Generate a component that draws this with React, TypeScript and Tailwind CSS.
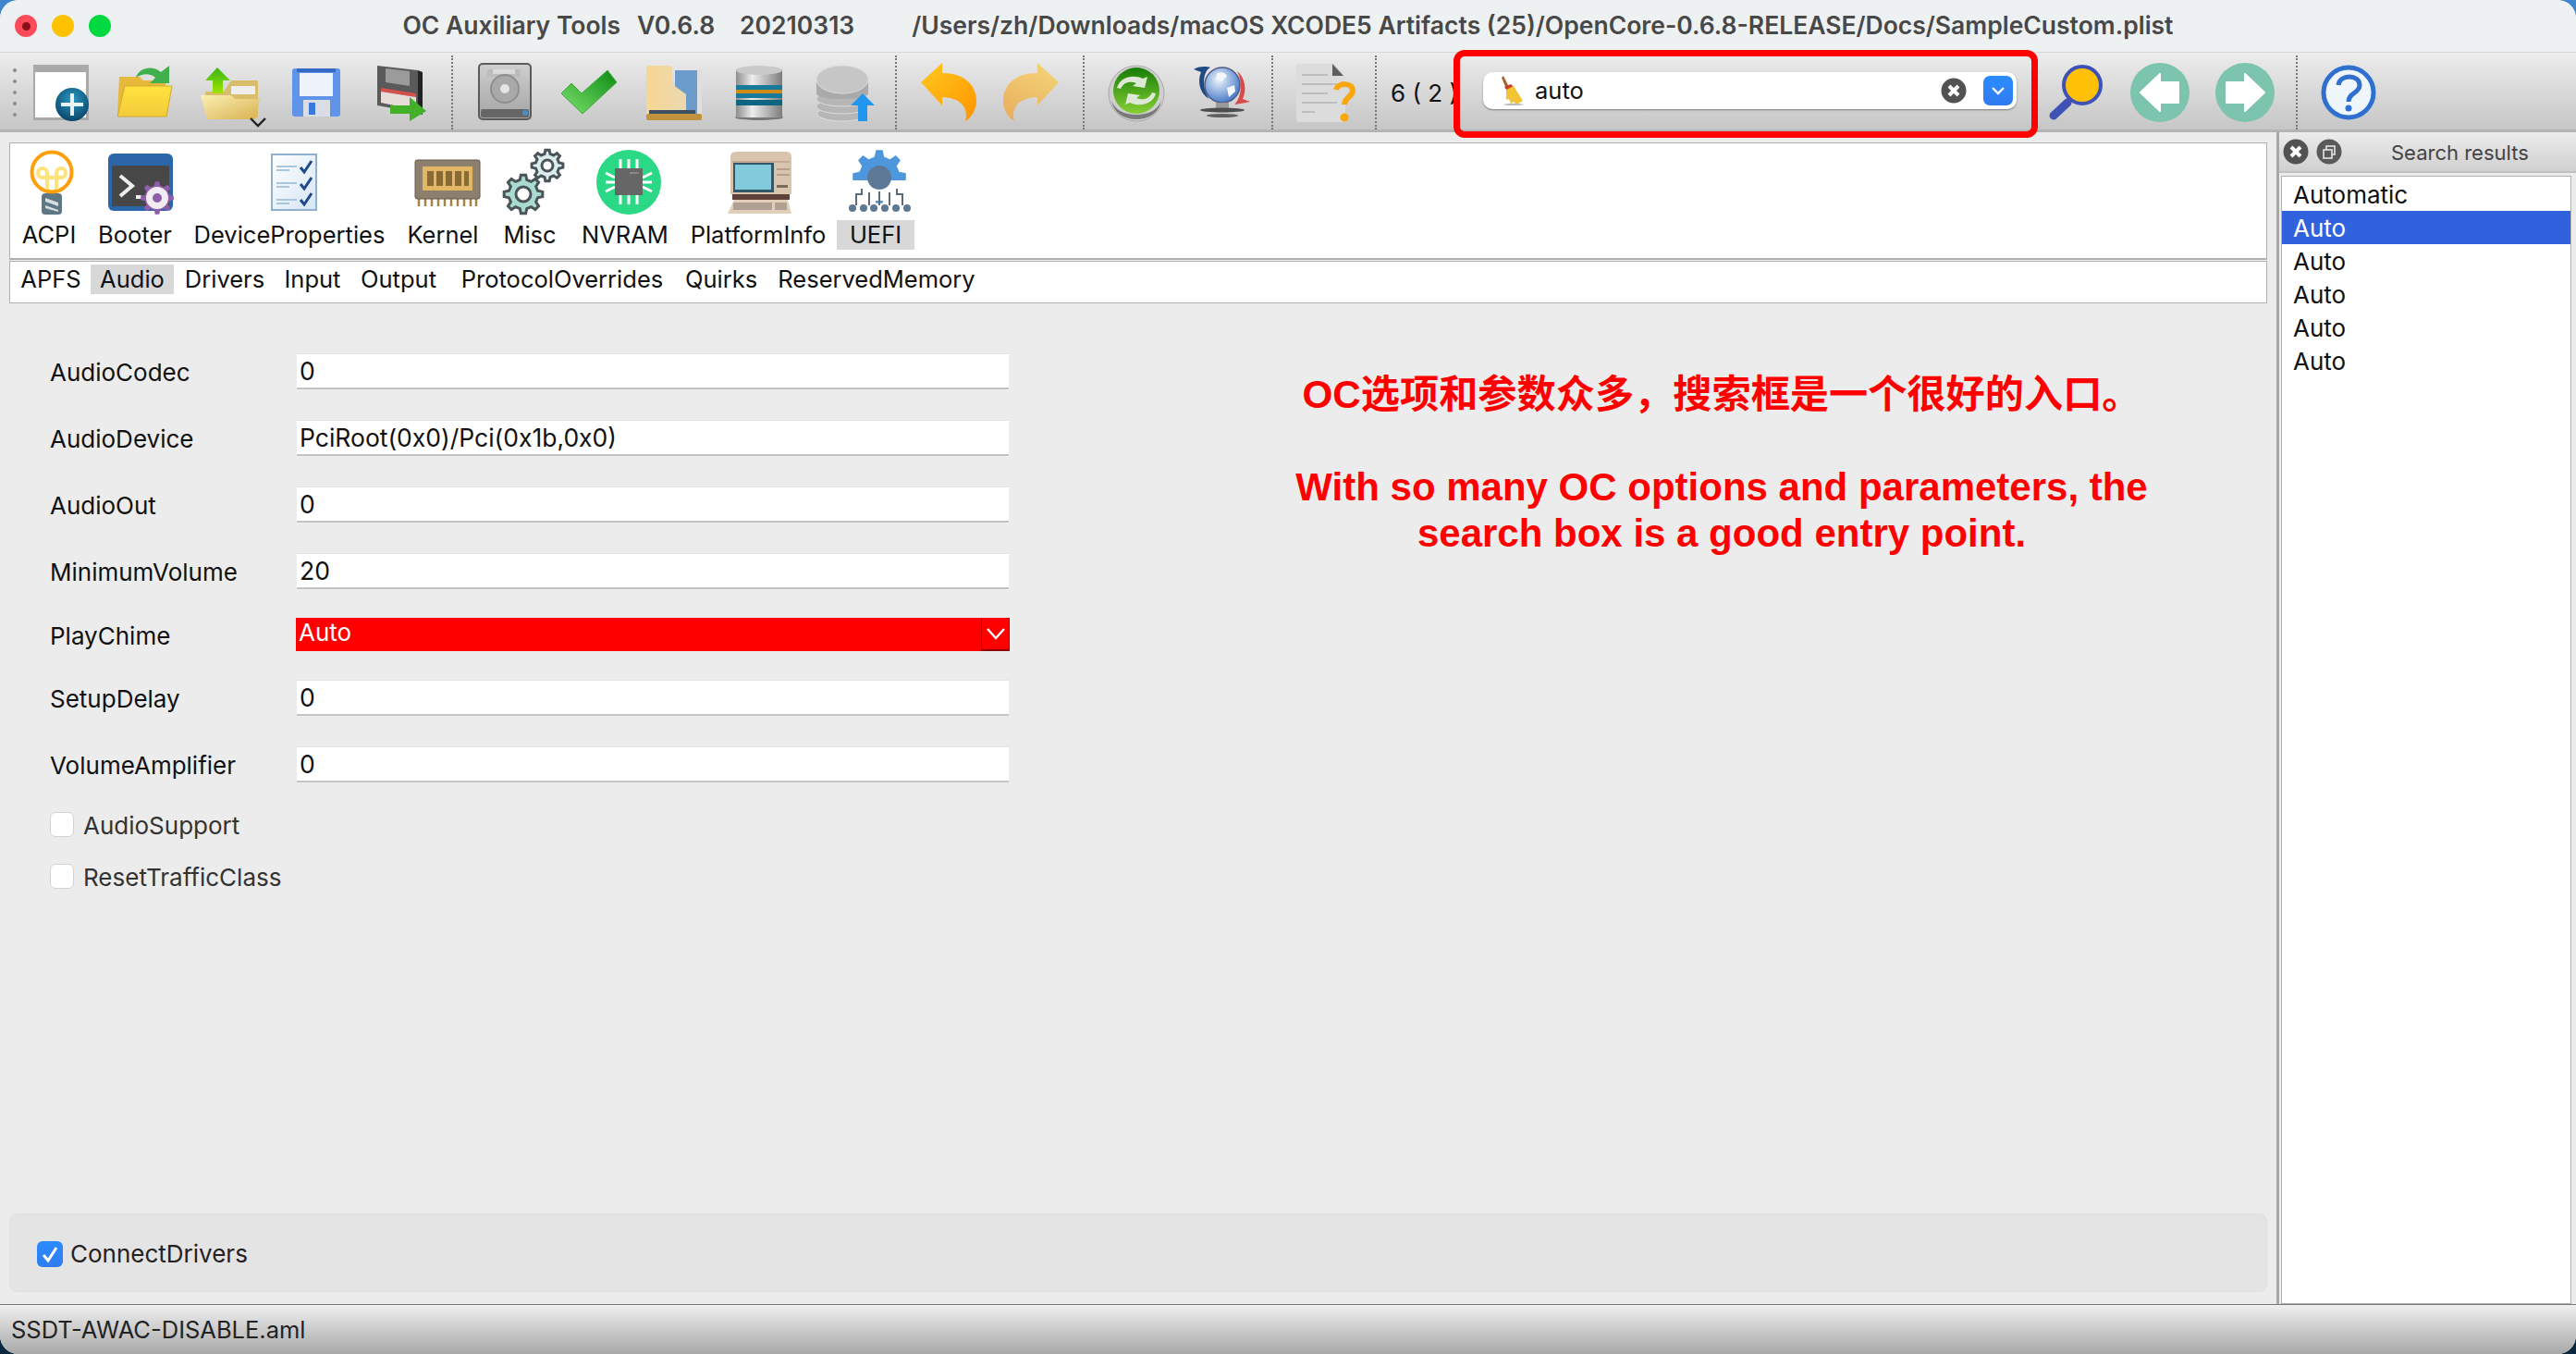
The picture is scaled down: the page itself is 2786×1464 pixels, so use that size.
import React from 'react';

// teeth on a gear outline, the icons below reuse it
const gearPath = (cx: number, cy: number, r: number, teeth: number) => {
  const pts: string[] = [];
  const inner = r * 0.76;
  const step = (Math.PI * 2) / teeth;
  for (let i = 0; i < teeth; i++) {
    const a = i * step - Math.PI / 2;
    const w = step * 0.2;
    const list: [number, number][] = [
      [inner, a - w * 1.5],
      [r, a - w * 0.8],
      [r, a + w * 0.8],
      [inner, a + w * 1.5],
    ];
    list.forEach(([rad, ang]) => pts.push(`${(cx + rad * Math.cos(ang)).toFixed(2)} ${(cy + rad * Math.sin(ang)).toFixed(2)}`));
  }
  return `M${pts.join('L')}Z`;
};

const Box = ({ children }: { children: React.ReactNode }) => (
  <svg width="70" height="70" viewBox="0 0 70 70" className="overflow-visible shrink-0">
    {children}
  </svg>
);

const NewIcon = () => (
  <Box>
    <defs>
      <radialGradient id="nw" cx="0.5" cy="0.35" r="0.7">
        <stop offset="0" stopColor="#2b9ac6" />
        <stop offset="1" stopColor="#073f63" />
      </radialGradient>
    </defs>
    <rect x="6" y="5" width="60" height="60" fill="#a9a9a9" />
    <rect x="8" y="13" width="55" height="49" fill="#fff" />
    <circle cx="48" cy="48" r="18" fill="url(#nw)" />
    <path d="M46 36h4v10h10v4H50v10h-4V50H36v-4h10z" fill="#fff" opacity="0.9" />
  </Box>
);

const OpenIcon = () => (
  <Box>
    <defs>
      <linearGradient id="op" x1="0" y1="0" x2="0" y2="1">
        <stop offset="0" stopColor="#ffe33f" />
        <stop offset="1" stopColor="#f3cb3a" />
      </linearGradient>
    </defs>
    <path d="M7 18h22l4 4h24v38H5z" fill="#e6b93a" />
    <path d="M13 28h51l-6 33H5z" fill="url(#op)" stroke="#d5a92c" />
    <path d="M25 19c3-11 18-14 27-6l9-7v19H40l6-6c-5-5-14-5-21 0z" fill="#3fb04c" />
  </Box>
);

const OpenUpIcon = () => (
  <Box>
    <defs>
      <linearGradient id="ou" x1="0" y1="0" x2="1" y2="1">
        <stop offset="0" stopColor="#fbf0b4" />
        <stop offset="1" stopColor="#d8b14f" />
      </linearGradient>
      <linearGradient id="ou2" x1="0" y1="0" x2="0" y2="1">
        <stop offset="0" stopColor="#39b516" />
        <stop offset="1" stopColor="#9ee500" />
      </linearGradient>
    </defs>
    <path d="M8 34h20l8-12h29v40H10z" fill="#d9bd6a" />
    <rect x="36" y="28" width="26" height="9" fill="#eee" />
    <path d="M3 38h33l4 4h27l-5 22H10z" fill="url(#ou)" />
    <path d="M21 8l14 14h-8v14H16V22H8z" fill="url(#ou2)" />
    <path d="M57 63l8 8 8-8" fill="none" stroke="#222" strokeWidth="2.4" />
  </Box>
);

const SaveIcon = () => (
  <Box>
    <rect x="10" y="9" width="52" height="52" rx="3" fill="#5f94e8" />
    <rect x="15" y="9" width="42" height="4" fill="#3569c6" />
    <rect x="18" y="14" width="36" height="25" fill="#eef3fb" />
    <rect x="22" y="43" width="29" height="18" fill="#d9dde6" />
    <rect x="28" y="46" width="7" height="13" fill="#3a78dd" />
  </Box>
);

const SaveAsIcon = () => (
  <Box>
    <path d="M10 6l44 5v46l-44-8z" fill="#5a5a5a" />
    <path d="M54 11l5 2v46l-5-2z" fill="#222" />
    <path d="M19 9l26 3v16l-26-4z" fill="#9b9b9b" />
    <path d="M14 30l38 6v4l-38-6z" fill="#d8504a" />
    <path d="M14 34l38 6v14l-38-8z" fill="#e6dcd8" />
    <path d="M24 49h21v-9l18 15-18 11v-8H24z" fill="#43b02a" />
  </Box>
);

const DiskIcon = () => (
  <Box>
    <defs>
      <linearGradient id="dk" x1="0" y1="0" x2="0" y2="1">
        <stop offset="0" stopColor="#cfcfcf" />
        <stop offset="1" stopColor="#a3a3a3" />
      </linearGradient>
    </defs>
    <rect x="8" y="4" width="56" height="60" rx="4" fill="url(#dk)" stroke="#5b5b5b" strokeWidth="2" />
    <rect x="17" y="10" width="36" height="8" fill="#bcbcbc" />
    <rect x="23" y="10" width="24" height="5" fill="#dadada" />
    <circle cx="36" cy="31" r="15" fill="#a9a9a9" stroke="#8e8e8e" strokeWidth="2" />
    <circle cx="36" cy="31" r="5" fill="#e4e4e4" />
    <rect x="10" y="53" width="52" height="9" rx="2" fill="#666" />
    <circle cx="58" cy="57" r="3" fill="#4a8ec7" />
  </Box>
);

const CheckIcon = () => (
  <Box>
    <defs>
      <linearGradient id="ck" x1="0" y1="1" x2="1" y2="0">
        <stop offset="0" stopColor="#7ce36f" />
        <stop offset="1" stopColor="#0b8a12" />
      </linearGradient>
    </defs>
    <path d="M5 36l11-11 11 11 28-25 10 13-37 34z" fill="url(#ck)" stroke="#43a83c" />
  </Box>
);

const FolderIcon = () => (
  <Box>
    <defs>
      <linearGradient id="fd" x1="0" y1="0" x2="1" y2="0">
        <stop offset="0" stopColor="#f7d693" />
        <stop offset="1" stopColor="#ecd9b0" />
      </linearGradient>
    </defs>
    <rect x="36" y="11" width="24" height="50" fill="#6c9ccb" />
    <rect x="60" y="10" width="5" height="52" fill="#dedede" />
    <path d="M5 8q0-2 3-2h21q3 0 4 3v17l15 11v22H5z" fill="url(#fd)" />
    <rect x="8" y="54" width="50" height="4" fill="#3e4f60" />
    <rect x="5" y="58" width="60" height="7" rx="2" fill="#c2923f" />
  </Box>
);

const DbIcon = () => (
  <Box>
    <defs>
      <linearGradient id="db" x1="0" y1="0" x2="1" y2="0">
        <stop offset="0" stopColor="#8d8d8d" />
        <stop offset="0.35" stopColor="#ededed" />
        <stop offset="1" stopColor="#7d7d7d" />
      </linearGradient>
    </defs>
    <ellipse cx="35" cy="62" rx="26" ry="3" fill="#777" />
    <rect x="10" y="10" width="50" height="52" fill="url(#db)" />
    <ellipse cx="35" cy="11" rx="25" ry="5" fill="#c9c9c9" />
    <rect x="10" y="27" width="50" height="5" fill="#187a9a" />
    <rect x="10" y="32" width="50" height="4" fill="#d08a16" />
    <rect x="10" y="36" width="50" height="5" fill="#187a9a" />
    <rect x="10" y="43" width="50" height="6" fill="#0f6482" />
  </Box>
);

const DbUpIcon = () => (
  <Box>
    <g fill="#b6b6b6" stroke="#dcdcdc">
      <ellipse cx="33" cy="58" rx="27" ry="8" />
      <ellipse cx="33" cy="50" rx="28" ry="8" />
      <ellipse cx="33" cy="42" rx="28" ry="8" />
    </g>
    <ellipse cx="33" cy="22" rx="28" ry="16" fill="#b9b9b9" />
    <path d="M5 22v14c0 8 56 8 56 0V22z" fill="#aaa" />
    <ellipse cx="33" cy="21" rx="28" ry="15" fill="#c6c6c6" stroke="#dcdcdc" />
    <path d="M55 36l13 13h-8v17H50V49h-8z" fill="#2196ee" />
  </Box>
);

const UndoIcon = ({ flip, light }: { flip?: boolean; light?: boolean }) => (
  <Box>
    <defs>
      <linearGradient id="un" x1="0" y1="0" x2="1" y2="1">
        <stop offset="0" stopColor="#ffc81f" />
        <stop offset="1" stopColor="#ff9400" />
      </linearGradient>
    </defs>
    <g transform={flip ? 'translate(69 0) scale(-1 1)' : undefined} opacity={light ? 0.55 : 1}>
      <path d="M6 24L29 3v11c24 0 37 13 37 30 0 9-5 18-12 22 3-10 0-25-25-26v9z" fill="url(#un)" />
    </g>
  </Box>
);

const RefreshIcon = () => (
  <Box>
    <defs>
      <linearGradient id="rf" x1="0" y1="0" x2="0" y2="1">
        <stop offset="0" stopColor="#167d07" />
        <stop offset="1" stopColor="#86cf34" />
      </linearGradient>
    </defs>
    <circle cx="35" cy="36" r="30" fill="#cfcfcf" stroke="#a8a8a8" />
    <path d="M8 44c3 14 14 20 27 20s24-6 27-20c-4 10-14 15-27 15S12 54 8 44z" fill="#7a7a7a" />
    <circle cx="35" cy="33" r="25" fill="url(#rf)" />
    <path d="M14 30c3-12 18-15 28-10l5-2-3 12-13-2 4-3c-7-3-14-1-17 6z" fill="#dfe8d6" />
    <path d="M56 36c-3 12-18 15-28 10l-5 2 3-12 13 2-4 3c7 3 14 1 17-6z" fill="#dfe8d6" />
  </Box>
);

const GlobeIcon = () => (
  <Box>
    <defs>
      <radialGradient id="gb" cx="0.4" cy="0.35" r="0.7">
        <stop offset="0" stopColor="#eef4fb" />
        <stop offset="1" stopColor="#3f74c4" />
      </radialGradient>
    </defs>
    <path d="M5 10c7-4 14-3 18-2C15 12 13 30 22 42 11 36 9 22 13 13z" fill="#1f4a84" />
    <path d="M52 12c8 6 11 20 6 30l8 3-16 3c-2 0 0 0 0-1 7-8 8-24 2-35z" fill="#d94a4a" />
    <circle cx="36" cy="27" r="19" fill="url(#gb)" stroke="#4f5b84" strokeWidth="1.5" />
    <path d="M30 14c5-2 10 0 11 3l-5 6-7-2zM41 30l8-3 1 7-7 6z" fill="#f4f6fa" />
    <rect x="29" y="46" width="14" height="8" fill="#9a9a9a" />
    <ellipse cx="36" cy="54" rx="24" ry="2.5" fill="#4d4d4d" />
    <ellipse cx="36" cy="60" rx="17" ry="2" fill="#5f5f5f" />
  </Box>
);

const HelpDocIcon = () => (
  <Box>
    <path d="M4 7q0-3 3-3h38l12 14v49H7q-3 0-3-3z" fill="#dcdcdc" />
    <path d="M43 4l12 13H43z" fill="#5e5e5e" />
    <g stroke="#b4b4b4" strokeWidth="1.5">
      <path d="M10 16h28M10 26h38M10 36h28M10 46h38M10 56h14" />
    </g>
    <path d="M47 32c2-8 18-8 18 1 0 7-9 7-9 15" fill="none" stroke="#f9a70a" strokeWidth="6" />
    <circle cx="56" cy="62" r="4.5" fill="#f9a70a" />
  </Box>
);

const BroomIcon = () => (
  <svg width="28" height="32" viewBox="0 0 28 32" className="shrink-0">
    <path d="M4 0l6 12-3 2L2 2z" fill="#a8662a" />
    <path d="M5 12l7-3 3 3-7 4z" fill="#c93b2b" />
    <path d="M7 15l8-4 10 16-7 4-3-3-3 2-2-5-3 1z" fill="#f2c334" />
    <ellipse cx="15" cy="31" rx="11" ry="1.2" fill="#bbb" />
  </svg>
);

const CircleX = () => (
  <svg width="28" height="28" viewBox="0 0 28 28" className="shrink-0">
    <circle cx="14" cy="14" r="13.5" fill="#525252" />
    <path d="M9 9l10 10M19 9L9 19" stroke="#fff" strokeWidth="4" />
  </svg>
);

const CircleRestore = () => (
  <svg width="28" height="28" viewBox="0 0 28 28" className="shrink-0">
    <circle cx="14" cy="14" r="13.5" fill="#5a5a5a" />
    <rect x="11" y="8" width="9" height="9" fill="none" stroke="#e5e5e5" strokeWidth="1.6" />
    <rect x="8" y="12" width="9" height="9" fill="#5a5a5a" stroke="#e5e5e5" strokeWidth="1.6" />
  </svg>
);

const MagnifierIcon = () => (
  <Box>
    <path d="M27 46L12 60" stroke="#3f51b5" strokeWidth="9" strokeLinecap="round" />
    <circle cx="43" cy="27" r="20" fill="#ffc107" stroke="#3f51b5" strokeWidth="4" />
  </Box>
);

const ArrowCircle = ({ right }: { right?: boolean }) => (
  <Box>
    <circle cx="35" cy="35" r="32" fill="#7cc4ad" />
    <g transform={right ? 'translate(70 0) scale(-1 1)' : undefined}>
      <path d="M14 35l21-20v9h20v22H35v9z" fill="#fff" stroke="#fff" strokeLinejoin="round" strokeWidth="2" />
    </g>
  </Box>
);

const HelpIcon = () => (
  <Box>
    <circle cx="35" cy="35" r="27" fill="#eef5fb" stroke="#2f6fd0" strokeWidth="5" />
    <path d="M24 27c1-12 23-12 23 0 0 9-12 8-12 18" fill="none" stroke="#2f6fd0" strokeWidth="5" />
    <circle cx="35" cy="52" r="3.5" fill="#2f6fd0" />
  </Box>
);

const BulbIcon = () => (
  <Box>
    <rect x="27" y="47" width="22" height="23" rx="4" fill="#5d7783" />
    <path d="M31 52l14 5v4l-14-5zM31 60l14 5v2l-14-4z" fill="#d6dde0" />
    <circle cx="38" cy="24" r="21.5" fill="#fff" stroke="#ff9f0a" strokeWidth="4" />
    <path d="M33 43V25a5 5 0 1 0-5 5h20a5 5 0 1 0-5-5v18" fill="none" stroke="#ffe27a" strokeWidth="4" />
  </Box>
);

const BooterIcon = () => (
  <Box>
    <rect x="6" y="4" width="70" height="62" rx="6" fill="#2a66a8" />
    <rect x="10" y="17" width="62" height="44" fill="#474747" />
    <path d="M19 28l13 11-13 11" fill="none" stroke="#eee" strokeWidth="4" />
    <rect x="36" y="49" width="6" height="4" fill="#eee" />
    <path d={gearPath(59, 52, 18, 8)} fill="#8f5ea8" />
    <circle cx="59" cy="52" r="12" fill="#f1ecf3" />
    <circle cx="59" cy="52" r="5" fill="#8f5ea8" />
  </Box>
);

const ChecklistIcon = () => (
  <Box>
    <defs>
      <linearGradient id="cl" x1="0" y1="0" x2="1" y2="1">
        <stop offset="0" stopColor="#fff" />
        <stop offset="1" stopColor="#d5e5f5" />
      </linearGradient>
    </defs>
    <rect x="16" y="5" width="48" height="60" fill="url(#cl)" stroke="#8fb0cf" strokeWidth="2" />
    <g stroke="#a9c6de" strokeWidth="2">
      <path d="M21 18h22M21 22h14M21 36h22M21 40h14M21 54h22M21 58h14" />
    </g>
    <g fill="none" stroke="#1e4a8a" strokeWidth="3">
      <path d="M47 19l4 5 8-12M47 37l4 5 8-12M47 54l4 5 8-12" />
    </g>
  </Box>
);

const ChipIcon = () => (
  <Box>
    <g stroke="#a38543" strokeWidth="2.5">
      <path d="M9 46v15M16 46v15M23 46v15M30 46v15M37 46v15M44 46v15M51 46v15M58 46v15M65 46v15M71 46v15" />
    </g>
    <rect x="5" y="11" width="70" height="42" rx="2" fill="#8d7f6e" stroke="#65594a" />
    <rect x="13" y="18" width="54" height="26" fill="#e1b665" />
    <g fill="#8a6a33">
      <rect x="18" y="23" width="7" height="16" />
      <rect x="28" y="23" width="7" height="16" />
      <rect x="38" y="23" width="7" height="16" />
      <rect x="48" y="23" width="7" height="16" />
      <rect x="58" y="23" width="5" height="16" />
    </g>
  </Box>
);

const GearsIcon = () => (
  <Box>
    <path d={gearPath(54, 17, 17, 8)} fill="#d9ecee" stroke="#4b5459" strokeWidth="3" />
    <circle cx="54" cy="17" r="6" fill="#fff" stroke="#4b5459" strokeWidth="3" />
    <path d={gearPath(28, 48, 21, 8)} fill="#a9dbd0" stroke="#4b5459" strokeWidth="3" />
    <circle cx="28" cy="48" r="8" fill="#fff" stroke="#4b5459" strokeWidth="3" />
  </Box>
);

const NvramIcon = () => (
  <Box>
    <circle cx="39" cy="35" r="35" fill="#2bd886" />
    <g stroke="#fff" strokeWidth="3">
      <path d="M30 10v10M39 10v10M48 10v10M30 49v10M39 49v10M48 49v10" />
      <path d="M14 25l10 5M14 35h10M14 45l10-5M54 30l10-5M54 35h10M54 40l10 5" />
    </g>
    <rect x="24" y="20" width="30" height="29" fill="#666" />
    <rect x="40" y="24" width="10" height="2" fill="#888" />
  </Box>
);

const ComputerIcon = () => (
  <Box>
    <path d="M5 8q0-6 6-6h55q5 0 5 6v40H5z" fill="#d9c4ad" />
    <rect x="7" y="12" width="62" height="2" fill="#c4ab92" />
    <rect x="8" y="14" width="44" height="32" fill="#335668" />
    <rect x="10" y="16" width="39" height="27" fill="#82cbdc" />
    <rect x="55" y="20" width="14" height="2" fill="#b79f88" />
    <rect x="55" y="26" width="14" height="2" fill="#b79f88" />
    <rect x="55" y="38" width="12" height="3" fill="#7a6a5a" />
    <rect x="7" y="48" width="62" height="6" fill="#5e4038" />
    <path d="M9 54h58l4 15H2z" fill="#e2cfba" />
    <rect x="8" y="57" width="42" height="8" fill="#b0a093" />
    <rect x="53" y="57" width="13" height="8" fill="#b0a093" />
  </Box>
);

const UefiIcon = () => (
  <Box>
    <path d={gearPath(39, 29, 29, 8)} fill="#4f97dd" />
    <rect x="7" y="33" width="66" height="22" fill="#fff" />
    <circle cx="39" cy="30" r="13" fill="#5d7996" />
    <g fill="none" stroke="#5d6a78" strokeWidth="2">
      <path d="M39 45v15M28 46v14M50 46v14M20 42v6h-6v12M58 42v6h6v12" />
    </g>
    <g fill="#5d7996">
      <circle cx="10" cy="63" r="4" />
      <circle cx="22" cy="63" r="4" />
      <circle cx="33" cy="63" r="4" />
      <circle cx="45" cy="63" r="4" />
      <circle cx="57" cy="63" r="4" />
      <circle cx="69" cy="63" r="4" />
    </g>
  </Box>
);

const Sep = ({ className }: { className: string }) => (
  <div className={`h-[80px] self-end border-l-2 border-dotted border-[#777] ${className}`} />
);

const ToolBtn = ({ children }: { children: React.ReactNode }) => (
  <div className="w-[92px] flex items-center justify-center shrink-0">{children}</div>
);

const Box2 = ({ children }: { children: React.ReactNode }) => <div className="h-[70px] w-[70px]">{children}</div>;

const mainTabs = [
  { label: 'ACPI', width: 'w-[84px]', icon: <BulbIcon /> },
  { label: 'Booter', width: 'w-[102px]', icon: <BooterIcon /> },
  { label: 'DeviceProperties', width: 'w-[232px]', icon: <ChecklistIcon /> },
  { label: 'Kernel', width: 'w-[100px]', icon: <ChipIcon /> },
  { label: 'Misc', width: 'w-[88px]', icon: <GearsIcon /> },
  { label: 'NVRAM', width: 'w-[118px]', icon: <NvramIcon /> },
  { label: 'PlatformInfo', width: 'w-[170px]', icon: <ComputerIcon /> },
  { label: 'UEFI', width: 'w-[84px]', icon: <UefiIcon />, active: true },
];

const subTabs = [
  { label: 'APFS', className: 'ml-[1px] w-[86px]' },
  { label: 'Audio', className: 'w-[90px] bg-[#d8d8d8]' },
  { label: 'Drivers', className: 'w-[110px]' },
  { label: 'Input', className: 'w-[80px]' },
  { label: 'Output', className: 'w-[106px]' },
  { label: 'ProtocolOverrides', className: 'w-[248px]' },
  { label: 'Quirks', className: 'w-[96px]' },
  { label: 'ReservedMemory', className: 'w-[240px]' },
];

const fields = [
  { label: 'AudioCodec', value: '0', mt: 'mt-[54px]' },
  { label: 'AudioDevice', value: 'PciRoot(0x0)/Pci(0x1b,0x0)', mt: 'mt-[33px]' },
  { label: 'AudioOut', value: '0', mt: 'mt-[33px]' },
  { label: 'MinimumVolume', value: '20', mt: 'mt-[33px]' },
];

const lowerFields = [
  { label: 'SetupDelay', value: '0', mt: 'mt-[31px]' },
  { label: 'VolumeAmplifier', value: '0', mt: 'mt-[33px]' },
];

const results = ['Automatic', 'Auto', 'Auto', 'Auto', 'Auto', 'Auto'];

const FieldRow = ({ label, value, mt }: { label: string; value: string; mt: string }) => (
  <div className={`flex items-center h-[39px] ${mt}`}>
    <span className="w-[267px] shrink-0 pt-[1px]">{label}</span>
    <div className="w-[770px] h-full bg-white border-b-2 border-[#c4c4c4] border-t border-t-[#e4e4e4] pl-[3px] pt-[1px] flex items-center text-[26.5px] text-[#111]">
      {value}
    </div>
  </div>
);

const CheckRow = ({ label, mt }: { label: string; mt: string }) => (
  <div className={`flex items-center h-[27px] ${mt}`}>
    <div className="w-[26px] h-[27px] bg-white border border-[#d2d2d2] rounded-[6px] mr-[10px]" />
    <span className="text-[#333] pt-[2px]">{label}</span>
  </div>
);

export default function App() {
  return (
    <div className="w-[2786px] h-[1464px] bg-gradient-to-b from-[#3f86cc] to-[#0b2740]">
      <div className="w-full h-full rounded-[20px] overflow-hidden flex flex-col bg-[#ececec] text-[26px] text-[#111] font-['Inter','Noto_Sans',sans-serif]">
        {/* title bar */}
        <div className="h-[57px] shrink-0 bg-[#eef1f2] border-b border-[#d6d6d6] flex items-center relative pl-[16px]">
          <div className="flex gap-[16px]">
            <div className="w-[24px] h-[24px] rounded-full bg-[#ff4a58] flex items-center justify-center">
              <div className="w-[9px] h-[9px] rounded-full bg-[#8a0f18]" />
            </div>
            <div className="w-[24px] h-[24px] rounded-full bg-[#ffc200]" />
            <div className="w-[24px] h-[24px] rounded-full bg-[#00d93f]" />
          </div>
          <div className="flex-1 pr-[120px] flex justify-center whitespace-nowrap font-semibold text-[26.5px] text-[#484848]">
            <span>OC Auxiliary Tools</span>
            <span className="ml-[18px]">V0.6.8</span>
            <span className="ml-[27px]">20210313</span>
            <span className="ml-[62px]">/Users/zh/Downloads/macOS XCODE5 Artifacts (25)/OpenCore-0.6.8-RELEASE/Docs/SampleCustom.plist</span>
          </div>
        </div>

        {/* toolbar */}
        <div className="h-[86px] shrink-0 flex items-center pt-[3px] bg-gradient-to-b from-[#ececec] to-[#c6c6c6] border-b-[3px] border-[#b4b4b4]">
          <div className="w-[19px] shrink-0 flex flex-col items-center gap-[8px] pl-[12px]">
            <div className="w-[4px] h-[4px] rounded-full bg-[#8c8c8c]" />
            <div className="w-[4px] h-[4px] rounded-full bg-[#8c8c8c]" />
            <div className="w-[4px] h-[4px] rounded-full bg-[#8c8c8c]" />
            <div className="w-[4px] h-[4px] rounded-full bg-[#8c8c8c]" />
            <div className="w-[4px] h-[4px] rounded-full bg-[#8c8c8c]" />
          </div>
          <ToolBtn><NewIcon /></ToolBtn>
          <ToolBtn><OpenIcon /></ToolBtn>
          <ToolBtn><OpenUpIcon /></ToolBtn>
          <ToolBtn><SaveIcon /></ToolBtn>
          <ToolBtn><SaveAsIcon /></ToolBtn>
          <Sep className="ml-[9px] mr-[9px]" />
          <ToolBtn><DiskIcon /></ToolBtn>
          <ToolBtn><CheckIcon /></ToolBtn>
          <ToolBtn><FolderIcon /></ToolBtn>
          <ToolBtn><DbIcon /></ToolBtn>
          <ToolBtn><DbUpIcon /></ToolBtn>
          <Sep className="ml-[9px] mr-[9px]" />
          <ToolBtn><UndoIcon /></ToolBtn>
          <ToolBtn><UndoIcon flip light /></ToolBtn>
          <Sep className="ml-[8px] mr-[10px]" />
          <ToolBtn><RefreshIcon /></ToolBtn>
          <ToolBtn><GlobeIcon /></ToolBtn>
          <Sep className="ml-[8px] mr-[10px]" />
          <ToolBtn><HelpDocIcon /></ToolBtn>
          <Sep className="ml-[8px] mr-[15px]" />
          <span className="w-[68px] shrink-0 whitespace-pre">6 ( 2 )</span>
          <div className="relative z-10 w-[632px] h-[95px] -mt-[1px] -mb-[4px] pb-[7px] shrink-0 border-[7px] border-[#ff0000] rounded-[12px] pl-[25px] flex items-center">
            <div className="w-[577px] h-[40px] bg-white rounded-[10px] shadow-[0_1px_2px_rgba(0,0,0,0.4)] flex items-center pl-[18px] pr-[4px]">
              <BroomIcon />
              <span className="ml-[10px] flex-1 text-[25.5px]">auto</span>
              <CircleX />
              <div className="ml-[18px] w-[32px] h-[32px] rounded-[7px] bg-gradient-to-b from-[#2a8cff] to-[#2f7bf0] flex items-center justify-center">
                <svg width="16" height="12" viewBox="0 0 16 12">
                  <path d="M2 3l6 6 6-6" fill="none" stroke="#fff" strokeWidth="2.4" />
                </svg>
              </div>
            </div>
          </div>
          <div className="w-[79px] flex justify-center shrink-0"><MagnifierIcon /></div>
          <div className="ml-[7px]"><ToolBtn><ArrowCircle /></ToolBtn></div>
          <ToolBtn><ArrowCircle right /></ToolBtn>
          <Sep className="ml-[9px] mr-[9px]" />
          <ToolBtn><HelpIcon /></ToolBtn>
        </div>

        {/* content */}
        <div className="flex-1 flex min-h-0">
          <div className="w-[2462px] shrink-0 flex flex-col pt-[11px] px-[10px]">
            <div className="h-[127px] shrink-0 bg-white border border-[#b0b0b0] border-b-2 flex items-start text-[25.5px]">
              {mainTabs.map((t) => (
                <div key={t.label} className={`${t.width} shrink-0 flex flex-col items-center pt-[7px]`}>
                  <Box2>{t.icon}</Box2>
                  <span className={`mt-[6px] h-[32px] pt-[1px] flex items-center justify-center whitespace-nowrap w-full ${t.active ? 'bg-[#d8d8d8]' : ''}`}>
                    {t.label}
                  </span>
                </div>
              ))}
            </div>
            <div className="h-[46px] mt-[1px] shrink-0 bg-white border border-[#b0b0b0] flex items-start pt-[3px] text-[25.5px]">
              {subTabs.map((t) => (
                <span key={t.label} className={`${t.className} h-[32px] pt-[1px] flex items-center justify-center shrink-0`}>
                  {t.label}
                </span>
              ))}
            </div>

            <div className="flex-1 flex min-h-0">
              <div className="w-[1390px] shrink-0 flex flex-col pl-[44px]">
                {fields.map((f) => (
                  <FieldRow key={f.label} {...f} />
                ))}
                <div className="flex items-center h-[36px] mt-[31px]">
                  <span className="w-[266px] shrink-0 pt-[2px]">PlayChime</span>
                  <div className="w-[772px] h-full bg-[#ff0000] text-white pl-[3px] flex items-start justify-between">
                    <span className="leading-[32px]">Auto</span>
                    <div className="w-[31px] h-full border-l border-b-2 border-r border-[#8a0000] flex items-center justify-center">
                      <svg width="22" height="14" viewBox="0 0 22 14">
                        <path d="M2 2l9 10 9-10" fill="none" stroke="#fff" strokeWidth="2.4" />
                      </svg>
                    </div>
                  </div>
                </div>
                {lowerFields.map((f) => (
                  <FieldRow key={f.label} {...f} />
                ))}
                <CheckRow label="AudioSupport" mt="mt-[32px]" />
                <CheckRow label="ResetTrafficClass" mt="mt-[29px]" />
              </div>
              <div className="w-[924px] shrink-0 pt-[74px] text-center text-[#ff0000] font-bold text-[42px] leading-[50px] font-['Liberation_Sans','Noto_Sans_CJK_SC',sans-serif]">
                <p className="text-[42.2px]">OC选项和参数众多，搜索框是一个很好的入口。</p>
                <p className="mt-[50px]">With so many OC options and parameters, the search box is a good entry point.</p>
              </div>
            </div>

            <div className="h-[85px] shrink-0 mb-[13px] pt-[2px] bg-[#e4e4e4] border border-[#e0e0e0] rounded-[8px] flex items-center pl-[29px]">
              <div className="w-[28px] h-[28px] rounded-[6px] bg-gradient-to-b from-[#2a8cff] to-[#2f7bf0] flex items-center justify-center mr-[8px]">
                <svg width="20" height="20" viewBox="0 0 20 20">
                  <path d="M3 11l5 6 9-14" fill="none" stroke="#fff" strokeWidth="3" />
                </svg>
              </div>
              <span className="text-[#222]">ConnectDrivers</span>
            </div>
          </div>

          {/* search results panel */}
          <div className="flex-1 min-w-0 flex flex-col border-l-[3px] border-[#a8a8a8]">
            <div className="h-[44px] shrink-0 bg-gradient-to-b from-[#ececec] to-[#d0d0d0] border-b-2 border-[#c0c0c0] flex items-center pl-[4px] text-[#444] text-[22px]">
              <CircleX />
              <div className="ml-[8px]"><CircleRestore /></div>
              <span className="ml-[53px] pt-[2px]">Search results</span>
            </div>
            <div className="flex-1 mt-[3px] mr-[5px] ml-[2px] bg-white border border-[#b0b0b0]">
              {results.map((r, i) => (
                <div key={i} className={`h-[36px] pl-[12px] flex items-center ${i === 0 ? 'mt-[1px]' : ''} ${i === 1 ? 'bg-[#3162de] text-white' : ''}`}>
                  {r}
                </div>
              ))}
            </div>
          </div>
        </div>

        {/* status bar */}
        <div className="h-[54px] shrink-0 border-t border-[#777] bg-gradient-to-b from-[#f0f0f0] to-[#a8a8a8] flex items-center pl-[12px] pt-[2px] text-[25.5px] text-[#222]">
          SSDT-AWAC-DISABLE.aml
        </div>
      </div>
    </div>
  );
}
